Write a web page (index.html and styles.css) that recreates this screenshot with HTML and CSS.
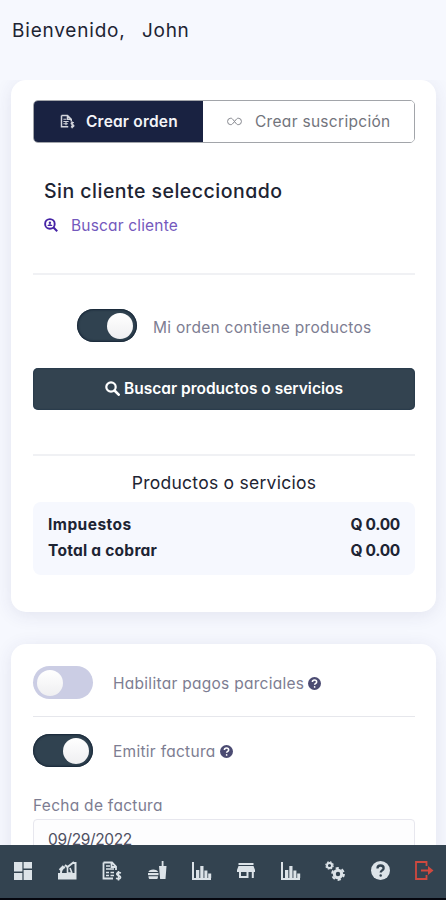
FILE: index.html
```html
<!DOCTYPE html>
<html lang="es">
<head>
<meta charset="utf-8">
<meta name="viewport" content="width=device-width, initial-scale=1">
<title>Crear orden</title>
<link rel="stylesheet" href="styles.css">
</head>
<body>
<svg class="defs" width="0" height="0">
  <symbol id="help" viewBox="0 0 20 20"><circle cx="10" cy="10" r="10" fill="currentColor"/><path class="mark" d="M6.8 7.8C6.8 3.6 13.3 3.9 13.3 7.5C13.3 9.9 10.2 9.8 10.2 12.1" fill="none"/><circle class="dot" cx="10.2" cy="15.2" r="1.3"/></symbol>
  <symbol id="chart" viewBox="0 0 20 20"><path d="M1 1v17h18" fill="none" stroke="currentColor" stroke-width="2"/><path d="M4 9h3.300v8H4zM8.300 5h3.200v12H8.300zM12.400 9.500h3V17h-3zM16.200 12.500h3V17h-3z" fill="currentColor"/></symbol>
</svg>
<header class="welcome"><span class="hello">Bienvenido,</span><span class="name">John</span></header>
<main>
  <section class="card order">
    <div class="tabs">
      <button class="tab active">
        <svg width="15" height="15" viewBox="0 0 20 20"><path d="M2 2h8l5 5v3M2 2v15h9M10 2v5h5" fill="none" stroke="currentColor" stroke-width="2"/><path d="M4.500 7h4M4.500 10h7M4.500 13h6M8 10v5" stroke="currentColor" stroke-width="1.500"/><path d="M18.500 11.500c-4-1-4.500 2-2 2.600 3.500.8 2 4-2 2.600M16.300 10v9" fill="none" stroke="currentColor" stroke-width="1.800"/></svg>
        <span class="t-orden">Crear orden</span>
      </button>
      <button class="tab">
        <svg width="15" height="9" viewBox="0 0 15 9"><path d="M7.500 4.500C5.500 1.700 4.800 1.200 3.800 1.200a3.200 3.200 0 0 0 0 6.500c1 0 1.700-.6 3.700-3.200s2.700-3.300 3.700-3.300a3.200 3.200 0 0 1 0 6.500c-1 0-1.700-.5-3.700-3.200z" fill="none" stroke="currentColor" stroke-width="1"/></svg>
        <span class="t-susc">Crear suscripción</span>
      </button>
    </div>
    <h2 class="client">Sin cliente seleccionado</h2>
    <a class="find">
      <svg width="14" height="14" viewBox="0 0 14 14"><circle cx="5.900" cy="5.900" r="4.800" fill="none" stroke="currentColor" stroke-width="1.900"/><path d="M9.500 9.500l3.700 3.700" stroke="currentColor" stroke-width="2.100"/><circle cx="5.900" cy="4.700" r="1.200" fill="currentColor"/><path d="M3.400 8c.3-2.200 4.700-2.200 5 0z" fill="currentColor"/></svg>
      <span class="t-find">Buscar cliente</span>
    </a>
    <hr class="rule first">
    <div class="contains"><span class="switch on"><i></i></span><span class="label t-contains">Mi orden contiene productos</span></div>
    <button class="search">
      <svg width="15" height="15" viewBox="0 0 15 15"><circle cx="6" cy="6" r="4.700" fill="none" stroke="currentColor" stroke-width="2.200"/><path d="M9.500 9.500l4.200 4.200" stroke="currentColor" stroke-width="2.600" stroke-linecap="round"/></svg>
      <span class="t-search">Buscar productos o servicios</span>
    </button>
    <hr class="rule second">
    <h3 class="products"><span>Productos o servicios</span></h3>
    <div class="totals">
      <div class="row"><span class="t-tax">Impuestos</span><span class="amount">Q 0.00</span></div>
      <div class="row"><span class="t-total">Total a cobrar</span><span class="amount">Q 0.00</span></div>
    </div>
  </section>
  <section class="card options">
    <div class="option"><span class="switch"><i></i></span><span class="label t-partial">Habilitar pagos parciales</span><svg class="hint" width="13" height="13"><use href="#help"/></svg></div>
    <hr class="rule thin">
    <div class="option"><span class="switch on"><i></i></span><span class="label t-invoice">Emitir factura</span><svg class="hint" width="13" height="13"><use href="#help"/></svg></div>
    <div class="date-label"><span class="label">Fecha de factura</span></div>
    <div class="date"><span>09/29/2022</span></div>
  </section>
</main>
<nav class="bar">
  <a><svg width="18" height="18" viewBox="0 0 18 18"><path d="M0 0h8.400v9.500H0zM0 11h8.400v7H0zM9.600 0H18v6.500H9.600zM9.600 8H18v10H9.600z" fill="currentColor"/></svg></a>
  <a><svg width="19" height="19" viewBox="0 0 19 19"><path d="M1 13h16.500v4.500H1zM3 12c0-3 1.500-5 4-6M15 2h2.500v11M1.500 9l4-4M7 4l2.500 2 6.500-5" fill="none" stroke="currentColor" stroke-width="2"/><path d="M1 14h16v3H1z" fill="currentColor"/><path d="M9.500 6v6h4M12 7l2 5" fill="none" stroke="currentColor" stroke-width="1.600"/></svg></a>
  <a><svg width="20" height="20" viewBox="0 0 20 20"><path d="M1.500 1.500H10l4 4V9M1.500 1.500v16H11M9.500 1.500V6H14" fill="none" stroke="currentColor" stroke-width="1.800"/><path d="M4 5h4M4 8h8M4 11.500h3M8.500 11.500h3.500M4 14.500h3M8.500 14.500H12" stroke="currentColor" stroke-width="1.600"/><path d="M19 12c-4.500-1.500-5.500 1.700-2.600 2.600 4 1 2 4.300-2.400 2.600M16.500 10v9.500" fill="none" stroke="currentColor" stroke-width="1.600"/></svg></a>
  <a><svg width="19" height="19" viewBox="0 0 19 19"><path d="M11 5h7.500l-1 13h-5.400zM13.700 0h1.800v5h-1.800zM.5 11C.5 7.500 10 7.500 10 11zM.5 15.200H10c0 3-1 2.800-2 2.800H2.500c-1 0-2 0-2-2.800z" fill="currentColor"/><path d="M0 13.100h10.500" stroke="currentColor" stroke-width="2.200"/></svg></a>
  <a><svg width="20" height="20"><use href="#chart"/></svg></a>
  <a><svg width="18" height="17" viewBox="0 0 18 17"><path d="M1.500 1h15v2h-15zM1.500 4h15L18 8v2h-1.200v6h-2v-6h-3.300v6H2v-6H0V8zM4 10v4h5.500v-4z" fill="currentColor" fill-rule="evenodd"/></svg></a>
  <a><svg width="20" height="20"><use href="#chart"/></svg></a>
  <a><svg width="20" height="20" viewBox="0 0 20 20" fill="none" stroke="currentColor"><circle cx="4.500" cy="4.500" r="2.500" stroke-width="1.900"/><circle cx="4.500" cy="4.500" r="3.700" stroke-width="1.200" stroke-dasharray="1.600 1.306"/><circle cx="13" cy="13" r="3.700" stroke-width="3"/><circle cx="13" cy="13" r="5.900" stroke-width="2" stroke-dasharray="3.200 2.979"/></svg></a>
  <a><svg width="19" height="19"><use href="#help"/></svg></a>
  <a class="exit"><svg width="19" height="19" viewBox="0 0 19 19"><path d="M11.500 5V1H1v17h10.500v-4" fill="none" stroke="currentColor" stroke-width="1.800"/><path d="M6 8.500h7V5l5.500 4.500L13 14v-3.500H6z" fill="currentColor"/></svg></a>
</nav>
</body>
</html>
```

FILE: styles.css
```css
* { box-sizing: border-box; }
body {
  --mark: #fff;
  margin: 0;
  height: 900px;
  overflow: hidden;
  display: flex;
  flex-direction: column;
  background: #f6f8fe;
  color: #1d2433;
  font-family: Inter, "Open Sans", sans-serif;
  font-feature-settings: "cv11";
  font-size: 15.5px;
  white-space: nowrap;
}
.defs { position: absolute; }
.welcome { flex: none; height: 80px; padding: 0 12px; line-height: 61px; font-size: 19px; display: flex; }
.hello { width: 130px; letter-spacing: .8px; }
.name { letter-spacing: .7px; }
main { flex: 1; min-height: 0; overflow: hidden; padding: 0 10px 0 11px; }
.card { background: #fff; border-radius: 15px; padding: 0 21px 0 22px; box-shadow: 0 3px 18px rgba(50, 50, 110, .1); }
.order { height: 532px; padding-top: 20px; margin-bottom: 32px; }
.options { height: 300px; padding-top: 21px; }
button { font: inherit; font-feature-settings: inherit; border: 0; padding: 0; margin: 0; }
.tabs { display: flex; height: 43px; border: 1px solid #a2a5aa; border-radius: 5px; overflow: hidden; }
.tab { display: flex; align-items: center; background: #fff; color: #72747c; flex: 1; padding-left: 24px; gap: 13px; letter-spacing: .3px; }
.tab svg { opacity: .85; }
.tab.active { flex: none; width: 169px; background: #192241; color: #f3f4f7; font-weight: 600; padding-left: 26px; gap: 11px; letter-spacing: .2px; }
.client { margin: 32px 0 0 11px; height: 32px; line-height: 32px; font-size: 19.5px; font-weight: 450; letter-spacing: .48px; }
.find { display: flex; align-items: center; height: 36px; margin-left: 11px; gap: 13px; color: #4523a5; }
.find span { color: #7459bd; letter-spacing: .17px; }
.rule { border: 0; height: 2px; background: #f0f1f4; margin: 0; }
.first { margin-top: 30px; }
.contains { display: flex; align-items: center; height: 33px; margin: 34px 0 26px 44px; gap: 16px; }
.contains .label { padding-top: 3px; }
.switch { flex: none; width: 60px; height: 33px; border-radius: 17px; background: #cbcde4; padding: 4px; display: flex; }
.switch i { width: 26px; height: 26px; border-radius: 50%; background: linear-gradient(#fff, #efeff1); }
.switch.on { background: #304250; box-shadow: inset 0 0 2px 1px #162536; justify-content: flex-end; }
.label { color: #7d7d92; letter-spacing: .28px; }
.search { width: 100%; height: 42px; border-radius: 5px; background: #334350; color: #fff; font-weight: 600; display: flex; align-items: center; justify-content: center; gap: 4px; padding-bottom: 1px; box-shadow: inset 0 0 2px #152a40; }
.second { margin-top: 44px; }
.products { margin: 12px 0 4px; height: 30px; line-height: 30px; font-size: 17.500px; font-weight: 400; text-align: center; letter-spacing: .26px; }
.totals { background: #f6f8fe; border-radius: 8px; height: 73px; padding: 10px 15px; font-weight: 700; }
.row { display: flex; justify-content: space-between; line-height: 26px; }
.t-tax { letter-spacing: .45px; }
.t-total { letter-spacing: .25px; }
.amount { letter-spacing: -.3px; }
.option { display: flex; align-items: center; height: 34px; }
.option .label { margin-left: 20px; padding-top: 2px; }
.hint { margin-left: 4px; margin-top: 2px; color: #4b4b72; }
.mark { stroke: var(--mark); stroke-width: 2.4px; }
.dot { fill: var(--mark); }
.thin { margin: 17px 0 16px; height: 1px; background: #e6e7ec; }
.date-label { margin-top: 27px; height: 24px; line-height: 24px; }
.date { margin-top: 1px; height: 42px; line-height: 40px; border: 1px solid #e7e7ee; border-radius: 4px; background: #fdfdfe; padding-left: 14px; color: #4f5062; letter-spacing: -.4px; }
.bar { --mark: #334350; position: relative; flex: none; height: 55px; background: #334350; color: #dce3e8; border-bottom: 2px solid #05070f; padding-left: 1px; display: grid; grid-template-columns: repeat(10, 44.6px); }
.bar a { display: flex; align-items: center; justify-content: center; padding-bottom: 2px; }
.bar .exit { color: #cf493f; }
```
